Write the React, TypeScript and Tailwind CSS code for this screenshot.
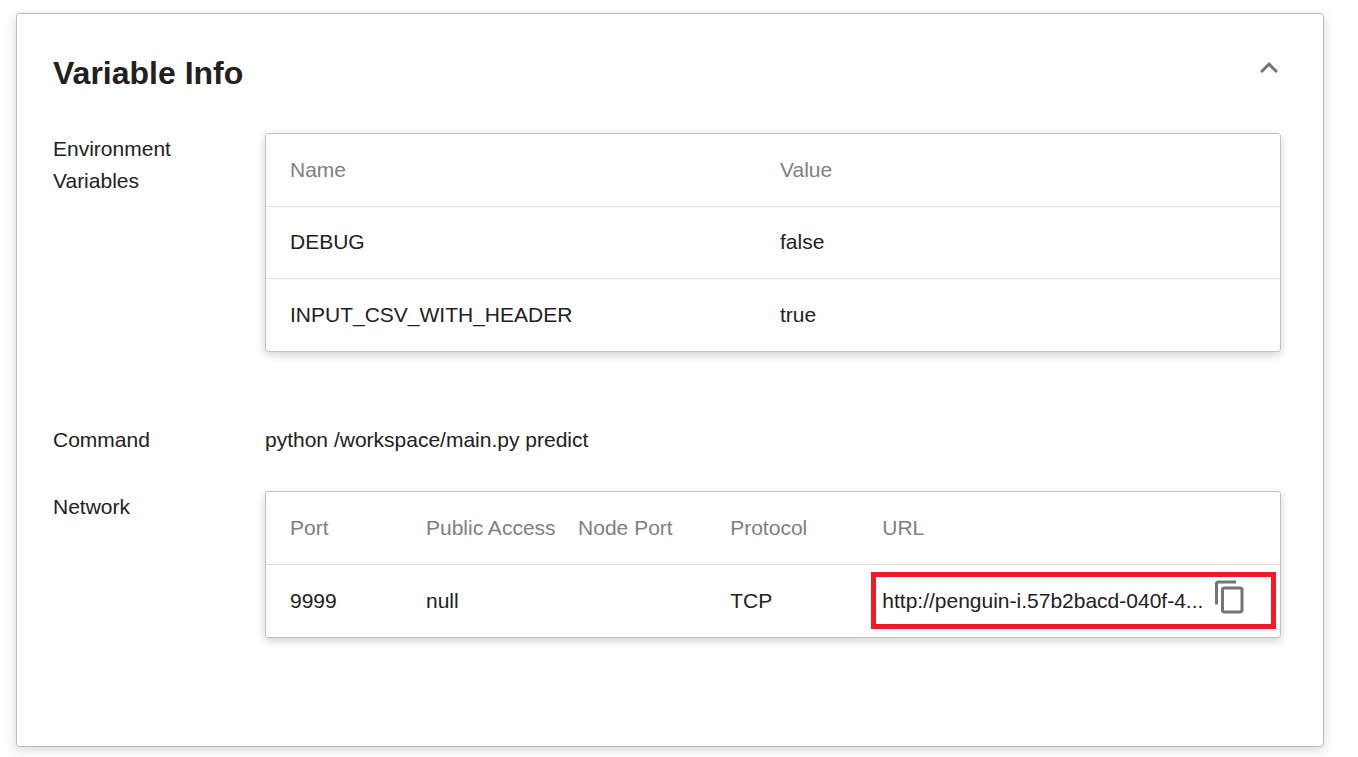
import type { ReactNode } from "react";
import { MdContentCopy, MdExpandLess } from "react-icons/md";

const envVars = [
  { name: "DEBUG", value: "false" },
  { name: "INPUT_CSV_WITH_HEADER", value: "true" },
];

const ports = [
  {
    port: "9999",
    publicAccess: "null",
    nodePort: "",
    protocol: "TCP",
    url: "http://penguin-i.57b2bacd-040f-4...",
  },
];

function InfoRow({ label, children }: { label: string; children: ReactNode }) {
  return (
    <div className="flex">
      <dt className="w-[212px] shrink-0 pr-16">{label}</dt>
      <dd className="min-w-0 flex-1">{children}</dd>
    </div>
  );
}

function TableCard({ children }: { children: ReactNode }) {
  return (
    <div className="rounded-[3px] border border-[#c2c2c4] shadow-[0_3px_10px_rgba(0,0,0,0.18)]">
      <table className="w-full table-fixed text-left">{children}</table>
    </div>
  );
}

function EnvTable() {
  return (
    <TableCard>
      <thead>
        <tr className="h-[72px] border-b border-[#dedede] text-[#808080]">
          <th className="w-[514px] pl-6 font-normal">Name</th>
          <th className="font-normal">Value</th>
        </tr>
      </thead>
      <tbody>
        {envVars.map((env) => (
          <tr
            key={env.name}
            className="h-[72px] border-b border-[#dedede] last:h-[73px] last:border-b-0"
          >
            <td className="pl-6">{env.name}</td>
            <td>{env.value}</td>
          </tr>
        ))}
      </tbody>
    </TableCard>
  );
}

function NetworkTable() {
  return (
    <TableCard>
      <thead>
        <tr className="h-[72px] border-b border-[#dedede] whitespace-nowrap text-[#808080]">
          <th className="w-[160px] pl-6 font-normal">Port</th>
          <th className="w-[15%] font-normal">Public Access</th>
          <th className="w-[15%] font-normal">Node Port</th>
          <th className="w-[15%] font-normal">Protocol</th>
          <th className="font-normal">URL</th>
        </tr>
      </thead>
      <tbody>
        {ports.map((row) => (
          <tr key={row.port} className="h-[73px]">
            <td className="pl-6">{row.port}</td>
            <td>{row.publicAccess}</td>
            <td>{row.nodePort}</td>
            <td>{row.protocol}</td>
            <td className="relative">
              <div className="flex items-center gap-[9px] whitespace-nowrap">
                <span>{row.url}</span>
                <button
                  type="button"
                  aria-label="Copy URL"
                  className="mb-2 text-[#757575]"
                >
                  <MdContentCopy className="size-9" />
                </button>
              </div>
              {/* highlight around the URL */}
              <div className="pointer-events-none absolute top-[7px] right-1 bottom-2 -left-[11px] border-5 border-[#ed1c24]" />
            </td>
          </tr>
        ))}
      </tbody>
    </TableCard>
  );
}

export default function App() {
  return (
    <main className="bg-white pt-[13px] pr-[34px] pb-2.5 pl-4 font-['Liberation_Sans',Arial,sans-serif] text-[21px] leading-8 text-[#212121]">
      <section className="rounded-[3px] border border-[#b8bccb] pt-9 pr-[42px] pb-[108px] pl-9 shadow-[0_3px_12px_rgba(0,0,0,0.16)]">
        <header className="flex items-start justify-between">
          <h1 className="pt-[3px] text-[32px] leading-10 font-bold">
            Variable Info
          </h1>
          <button
            type="button"
            aria-label="Collapse"
            className="-mr-1.5 text-[#757575]"
          >
            <MdExpandLess className="size-9" />
          </button>
        </header>
        <dl className="mt-10">
          <InfoRow label="Environment Variables">
            <EnvTable />
          </InfoRow>
          <div className="mt-[72px] mb-[35px]">
            <InfoRow label="Command">python /workspace/main.py predict</InfoRow>
          </div>
          <InfoRow label="Network">
            <NetworkTable />
          </InfoRow>
        </dl>
      </section>
    </main>
  );
}
